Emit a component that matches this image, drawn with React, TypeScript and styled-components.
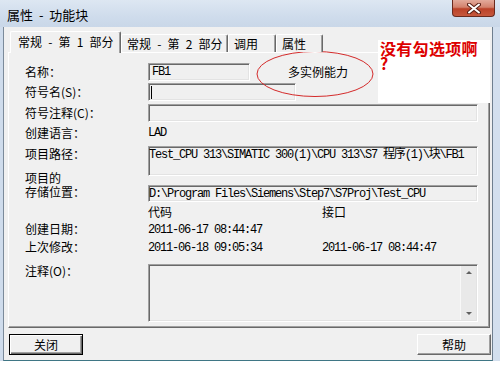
import React from "react";
import styled, { createGlobalStyle } from "styled-components";

const GlobalStyle = createGlobalStyle`
  html, body {
    margin: 0;
    padding: 0;
    background: #ffffff;
  }
  body {
    font-family: "Noto Sans CJK SC", "Liberation Sans", sans-serif;
    font-size: 12px;
    color: #000;
  }
`;

const Window = styled.div`
  position: relative;
  width: 500px;
  height: 361px;
  box-sizing: border-box;
  padding: 0 7px 0 3px;
  background: linear-gradient(90deg, #cfdcec 0%, #dbe5f1 50%, #d3dfee 100%);
  display: flex;
  flex-direction: column;
  overflow: hidden;
`;

const TitleBar = styled.div`
  height: 27px;
  flex: none;
  display: flex;
  align-items: flex-start;
  justify-content: space-between;
  margin: 0 -7px 0 -3px;
  padding-left: 7px;
  background: linear-gradient(180deg, #dde7f2 0%, #cfdcec 60%, #c9d7e8 100%);
`;

const Title = styled.div`
  font-size: 13px;
  line-height: 13px;
  margin-top: 8px;
  word-spacing: 3px;
  color: #000;
`;

const CloseButton = styled.div`
  width: 43px;
  height: 17px;
  margin-right: 5px;
  box-sizing: border-box;
  border: 1px solid #6a2a1e;
  border-top: none;
  border-radius: 0 0 4px 4px;
  background: linear-gradient(180deg, #e3aa9b 0%, #d3826d 45%, #bb4229 55%, #c6583d 100%);
  display: flex;
  align-items: center;
  justify-content: center;
`;

const Body = styled.div`
  flex: 1;
  display: flex;
  flex-direction: column;
  background: #f0f0f0;
  border-left: 1px solid #7b8a9a;
  border-right: 1px solid #6f7f8f;
  border-bottom: 1px solid #3f7685;
`;

const TabStrip = styled.div`
  display: flex;
  align-items: flex-end;
  height: 21px;
  margin-top: 4px;
  padding-left: 6px;
`;

const Tab = styled.div<{ $w: number; $active?: boolean }>`
  position: relative;
  width: ${(p) => p.$w}px;
  height: ${(p) => (p.$active ? 22 : 18)}px;
  margin-bottom: ${(p) => (p.$active ? -1 : 0)}px;
  z-index: ${(p) => (p.$active ? 2 : 1)};
  box-sizing: border-box;
  padding-left: ${(p) => (p.$active ? 7 : 5)}px;
  padding-top: ${(p) => (p.$active ? 2 : 1)}px;
  background: #f0f0f0;
  border-top: 1px solid #ffffff;
  border-left: 1px solid #ffffff;
  border-right: 1px solid #696969;
  box-shadow: inset -1px 0 #a0a0a0;
  border-radius: 2px 2px 0 0;
  font-size: 12px;
  line-height: 16px;
  word-spacing: 3.5px;
  white-space: nowrap;
`;

const Panel = styled.div`
  position: relative;
  margin-left: 4px;
  width: 482px;
  height: 276px;
  box-sizing: border-box;
  padding: 10px 11px 8px 16px;
  border-style: solid;
  border-width: 1px;
  border-color: #ffffff #696969 #696969 #ffffff;
  box-shadow: inset -1px -1px #a0a0a0;
  display: flex;
  flex-direction: column;
`;

const Row = styled.div<{ $mt: number; $align?: string }>`
  display: flex;
  align-items: ${(p) => p.$align || "center"};
  margin-top: ${(p) => p.$mt}px;
`;

const Label = styled.div<{ $pt?: number }>`
  width: 123px;
  flex: none;
  font-size: 12px;
  line-height: 14px;
  padding-top: ${(p) => p.$pt || 0}px;
  white-space: nowrap;
`;

const Field = styled.div<{ $w: number; $h: number; $pl?: number }>`
  position: relative;
  width: ${(p) => p.$w}px;
  height: ${(p) => p.$h}px;
  box-sizing: border-box;
  padding: 1px 0 0 ${(p) => p.$pl ?? 1}px;
  background: #f0f0f0;
  border-style: solid;
  border-width: 1px;
  border-color: #a0a0a0 #ffffff #ffffff #a0a0a0;
  box-shadow: inset 1px 1px #696969, inset -1px -1px #e3e3e3;
  display: flex;
  align-items: flex-start;
  overflow: hidden;
`;

const Mono = styled.span`
  font-family: "Liberation Mono", "Noto Sans CJK SC", monospace;
  font-size: 12px;
  letter-spacing: -1.2px;
  line-height: 14px;
  white-space: nowrap;
`;

const Caret = styled.span`
  display: block;
  width: 1px;
  height: 13px;
  margin: 1px 0 0 1px;
  background: #000;
`;

const Hint = styled.div`
  margin-left: 38px;
  font-size: 12px;
  line-height: 14px;
`;

const Col = styled.div<{ $w?: number }>`
  width: ${(p) => (p.$w ? `${p.$w}px` : "auto")};
  flex: none;
  font-size: 12px;
  line-height: 14px;
`;

const StackLine = styled.div`
  height: 14px;
  line-height: 14px;
`;

const StackLabel = styled(Label)`
  padding-bottom: 3px;
`;

const ScrollBar = styled.div`
  position: absolute;
  right: 1px;
  top: 1px;
  bottom: 1px;
  width: 16px;
  background: #e9e9e9;
  border-left: 1px solid #f8f8f8;
  display: flex;
  flex-direction: column;
  justify-content: space-between;
  align-items: center;
  padding: 5px 0 5px;
  box-sizing: border-box;
`;

const Arrow = styled.div<{ $down?: boolean }>`
  width: 0;
  height: 0;
  border-left: 3px solid transparent;
  border-right: 3px solid transparent;
  ${(p) =>
    p.$down
      ? "border-top: 3px solid #606060;"
      : "border-bottom: 3px solid #606060;"}
`;

const ButtonBar = styled.div`
  display: flex;
  justify-content: space-between;
  margin-top: 6px;
  padding: 0 1px 0 5px;
`;

const Button = styled.div<{ $default?: boolean }>`
  width: 74px;
  height: 21px;
  box-sizing: border-box;
  display: flex;
  align-items: center;
  justify-content: center;
  font-size: 12px;
  background: #f0f0f0;
  border-style: solid;
  border-width: 1px;
  border-color: ${(p) =>
    p.$default ? "#000000" : "#ffffff #696969 #696969 #ffffff"};
  box-shadow: ${(p) =>
    p.$default
      ? "inset 1px 1px #ffffff, inset -1px -1px #696969, inset -2px -2px #a0a0a0"
      : "inset -1px -1px #a0a0a0"};
`;

const Circle = styled.svg`
  position: absolute;
  left: 255px;
  top: 50px;
  pointer-events: none;
`;

const Note = styled.div`
  position: absolute;
  left: 378px;
  top: 40px;
  width: 112px;
  height: 63px;
  box-sizing: border-box;
  padding: 1px 0 0 2px;
  background: #ffffff;
  color: #dd0000;
  font-family: "Noto Sans CJK SC", sans-serif;
  font-weight: 700;
  font-size: 16px;
  letter-spacing: 0.3px;
`;

const NoteLine = styled.div`
  height: 15px;
  line-height: 15px;
`;

export default function App() {
  return (
    <>
      <GlobalStyle />
      <Window>
        <TitleBar>
          <Title>属性 - 功能块</Title>
          <CloseButton>
            <svg width="14" height="11" viewBox="0 0 14 11">
              <path d="M2 1.5 L12 9.5 M12 1.5 L2 9.5" stroke="#5a2016" strokeWidth="4" strokeLinecap="round" />
              <path d="M2 1.5 L12 9.5 M12 1.5 L2 9.5" stroke="#ffffff" strokeWidth="2" strokeLinecap="round" />
            </svg>
          </CloseButton>
        </TitleBar>
        <Body>
          <TabStrip>
            <Tab $w={111} $active>常规 - 第 1 部分</Tab>
            <Tab $w={107}>常规 - 第 2 部分</Tab>
            <Tab $w={48}>调用</Tab>
            <Tab $w={47}>属性</Tab>
          </TabStrip>
          <Panel>
            <Row $mt={0}>
              <Label>名称：</Label>
              <Field $w={102} $h={18} $pl={3}>
                <Mono>FB1</Mono>
              </Field>
              <Hint>多实例能力</Hint>
            </Row>
            <Row $mt={2}>
              <Label>符号名(S)：</Label>
              <Field $w={148} $h={18}>
                <Caret />
              </Field>
            </Row>
            <Row $mt={3}>
              <Label>符号注释(C)：</Label>
              <Field $w={330} $h={18} />
            </Row>
            <Row $mt={4}>
              <Label>创建语言：</Label>
              <Mono>LAD</Mono>
            </Row>
            <Row $mt={6} $align="flex-start">
              <Label $pt={1}>项目路径：</Label>
              <Field $w={330} $h={30} $pl={0}>
                <Mono>Test_CPU 313\SIMATIC 300(1)\CPU 313\S7 程序(1)\块\FB1</Mono>
              </Field>
            </Row>
            <Row $mt={-5} $align="flex-end">
              <StackLabel>
                <StackLine>项目的</StackLine>
                <StackLine>存储位置：</StackLine>
              </StackLabel>
              <Field $w={330} $h={17} $pl={0}>
                <Mono>D:\Program Files\Siemens\Step7\S7Proj\Test_CPU</Mono>
              </Field>
            </Row>
            <Row $mt={3}>
              <Label />
              <Col $w={174}>代码</Col>
              <Col>接口</Col>
            </Row>
            <Row $mt={2}>
              <Label>创建日期：</Label>
              <Col $w={174}>
                <Mono>2011-06-17 08:44:47</Mono>
              </Col>
            </Row>
            <Row $mt={2}>
              <Label>上次修改：</Label>
              <Col $w={174}>
                <Mono>2011-06-18 09:05:34</Mono>
              </Col>
              <Col>
                <Mono>2011-06-17 08:44:47</Mono>
              </Col>
            </Row>
            <Row $mt={9} $align="flex-start">
              <Label>注释(O)：</Label>
              <Field $w={330} $h={58}>
                <ScrollBar>
                  <Arrow />
                  <Arrow $down />
                </ScrollBar>
              </Field>
            </Row>
          </Panel>
          <ButtonBar>
            <Button $default>关闭</Button>
            <Button>帮助</Button>
          </ButtonBar>
        </Body>
        <Circle width="122" height="50" viewBox="0 0 122 50">
          <ellipse cx="60" cy="24" rx="58" ry="22.5" fill="none" stroke="#d42a2a" strokeWidth="1" />
        </Circle>
        <Note>
          <NoteLine>没有勾选项啊</NoteLine>
          <NoteLine>?</NoteLine>
        </Note>
      </Window>
    </>
  );
}
